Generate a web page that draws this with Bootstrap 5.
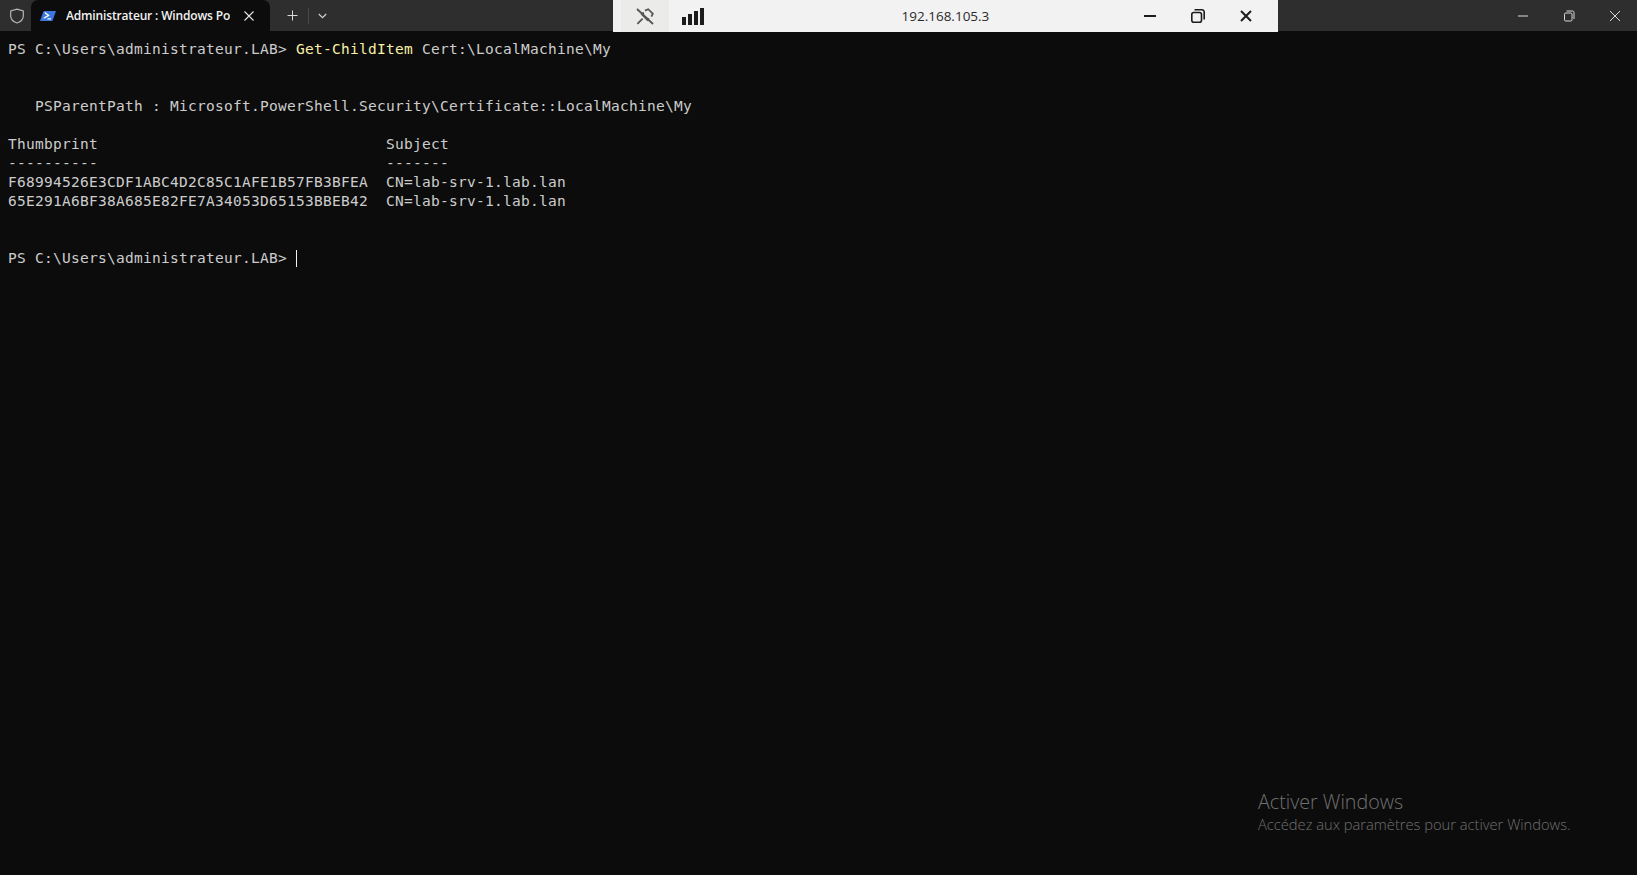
<!DOCTYPE html>
<html lang="fr">
<head>
<meta charset="utf-8">
<title>Administrateur : Windows PowerShell</title>
<link href="https://cdn.jsdelivr.net/npm/bootstrap@5.3.0/dist/css/bootstrap.min.css" rel="stylesheet">
<style>
html,body{height:100%;}
body{background:#0c0c0c;overflow:hidden;font-family:"Open Sans","Noto Sans",sans-serif;}
.term-app{height:875px;position:relative;}
.tabbar{height:31px;background:#2e2e2e;color:#fff;}
.shield-cell{width:33px;}
.term-tab{width:239px;height:31px;background:#0c0c0c;border-radius:7px 7px 0 0;padding-left:9px;font-size:12px;font-weight:600;letter-spacing:-.16px;margin-left:-2px;}
.tab-title{width:164px;margin-left:10px;overflow:hidden;white-space:nowrap;color:#f2f2f2;}
.tab-close{margin-left:14px;}
.tab-new{margin-left:17px;}
.tab-sep{width:1px;height:16px;background:#4a4a4a;margin:0 9px 0 10px;}
.win-controls{gap:34px;padding-right:16px;}
.win-controls svg,.rdp-ctrl svg{display:block;}
.console{font-family:"DejaVu Sans Mono","Liberation Mono",monospace;font-size:14.5px;letter-spacing:.27px;line-height:19px;color:#cccccc;padding:9px 0 0 8px;}
.cline{height:19px;white-space:pre;}
.cmd{color:#f9f1a5;}
.caret{display:inline-block;width:1px;height:17px;background:#f2f2f2;vertical-align:-4px;}
.rdp-bar{position:absolute;top:0;left:613px;width:665px;height:32px;background:#f2f2f2;color:#222;}
.rdp-pin{width:48px;height:32px;margin-left:8px;background:#ebebe9;}
.rdp-signal{margin-left:13px;}
.rdp-ip{position:absolute;left:288.5px;top:0;line-height:32px;font-size:13.5px;color:#2b2b2b;}
.rdp-ctrl{position:absolute;right:25px;top:0;height:32px;gap:34px;}
.activation{position:absolute;left:1258px;top:788px;color:#707070;}
.act-title{font-size:19.7px;font-weight:300;line-height:27px;}
.act-sub{font-size:14.7px;font-weight:300;line-height:19px;}
</style>
</head>
<body>
<div class="term-app">
  <div class="tabbar d-flex align-items-center">
    <div class="shield-cell d-flex justify-content-center">
      <svg width="16" height="16" viewBox="0 0 16 16" fill="none" stroke="#b5b5b5" stroke-width="1.2"><path d="M8 1.2 L14.3 3 V8 C14.3 11.5 11.5 13.8 8 15 C4.5 13.8 1.7 11.5 1.7 8 V3 Z"/></svg>
    </div>
    <div class="term-tab d-flex align-items-center">
      <svg width="16" height="12" viewBox="0 0 16 12"><path d="M3.6 1 H16 L12.4 11 H0 Z" fill="#3a78e0"/><path d="M4.8 2.6 L8.6 5.4 L3.8 8.2" fill="none" stroke="#fff" stroke-width="1.3"/><path d="M7.4 8.9 H11" stroke="#fff" stroke-width="1.2"/></svg>
      <span class="tab-title">Administrateur : Windows PowerShell</span>
      <svg class="tab-close" width="10" height="10" viewBox="0 0 10 10" stroke="#e6e6e6" stroke-width="1.1"><path d="M.5 .5 L9.5 9.5 M9.5 .5 L.5 9.5"/></svg>
    </div>
    <svg class="tab-new" width="11" height="11" viewBox="0 0 11 11" stroke="#d8d8d8" stroke-width="1"><path d="M5.5 .5 V10.5 M.5 5.5 H10.5"/></svg>
    <div class="tab-sep"></div>
    <svg width="9" height="6" viewBox="0 0 9 6" fill="none" stroke="#d0d0d0" stroke-width="1.2"><path d="M.8 1 L4.5 4.7 L8.2 1"/></svg>
    <div class="win-controls d-flex align-items-center ms-auto">
      <svg width="12" height="12" viewBox="0 0 12 12" stroke="#d8d8d8" stroke-width="1"><path d="M1 6 H11"/></svg>
      <svg width="12" height="12" viewBox="0 0 12 12" fill="none" stroke="#d8d8d8" stroke-width="1"><rect x="1.5" y="3" width="7.5" height="8" rx="1.2"/><path d="M3.5 1 H9.5 A1.5 1.5 0 0 1 11 2.5 V9"/></svg>
      <svg width="12" height="12" viewBox="0 0 12 12" stroke="#d8d8d8" stroke-width="1"><path d="M1 1 L11 11 M11 1 L1 11"/></svg>
    </div>
  </div>

  <div class="console">
    <div class="cline">PS C:\Users\administrateur.LAB&gt; <span class="cmd">Get-ChildItem</span> Cert:\LocalMachine\My</div>
    <div class="cline"></div>
    <div class="cline"></div>
    <div class="cline">   PSParentPath : Microsoft.PowerShell.Security\Certificate::LocalMachine\My</div>
    <div class="cline"></div>
    <div class="cline">Thumbprint                                Subject</div>
    <div class="cline">----------                                -------</div>
    <div class="cline">F68994526E3CDF1ABC4D2C85C1AFE1B57FB3BFEA  CN=lab-srv-1.lab.lan</div>
    <div class="cline">65E291A6BF38A685E82FE7A34053D65153BBEB42  CN=lab-srv-1.lab.lan</div>
    <div class="cline"></div>
    <div class="cline"></div>
    <div class="cline">PS C:\Users\administrateur.LAB&gt; <span class="caret"></span></div>
  </div>

  <div class="rdp-bar d-flex align-items-center">
    <div class="rdp-pin d-flex align-items-center justify-content-center">
      <svg width="18" height="17" viewBox="0 0 18 17" fill="none" stroke="#555" stroke-width="1.8"><path d="M1 1 L17 16"/><path d="M9 2.6 L12.2 1.2 L16.8 5.6 L15.4 8.6"/><path d="M5.2 5.6 L12 12.6 M5.2 5.6 L8 5 M12 12.6 L12.4 10"/><path d="M6.6 10.6 L1.4 15.8"/></svg>
    </div>
    <svg class="rdp-signal" width="22" height="17" viewBox="0 0 22 17" fill="#1c1c1c"><rect x="0" y="9" width="4" height="8"/><rect x="6" y="6" width="4" height="11"/><rect x="12" y="3" width="4" height="14"/><rect x="18" y="0" width="4" height="17"/></svg>
    <div class="rdp-ip">192.168.105.3</div>
    <div class="rdp-ctrl d-flex align-items-center">
      <svg width="14" height="14" viewBox="0 0 14 14" stroke="#1c1c1c" stroke-width="2"><path d="M1 7 H13"/></svg>
      <svg width="14" height="14" viewBox="0 0 14 14" fill="none" stroke="#1c1c1c" stroke-width="1.6"><rect x=".8" y="3.5" width="9.7" height="9.7" rx="2"/><path d="M3.5 .8 H11 A2.2 2.2 0 0 1 13.2 3 V10.5"/></svg>
      <svg width="14" height="14" viewBox="0 0 14 14" stroke="#1c1c1c" stroke-width="2"><path d="M2 2 L12 12 M12 2 L2 12"/></svg>
    </div>
  </div>

  <div class="activation">
    <div class="act-title">Activer Windows</div>
    <div class="act-sub">Accédez aux paramètres pour activer Windows.</div>
  </div>
</div>
<script src="https://cdn.jsdelivr.net/npm/bootstrap@5.3.0/dist/js/bootstrap.bundle.min.js"></script>
</body>
</html>
